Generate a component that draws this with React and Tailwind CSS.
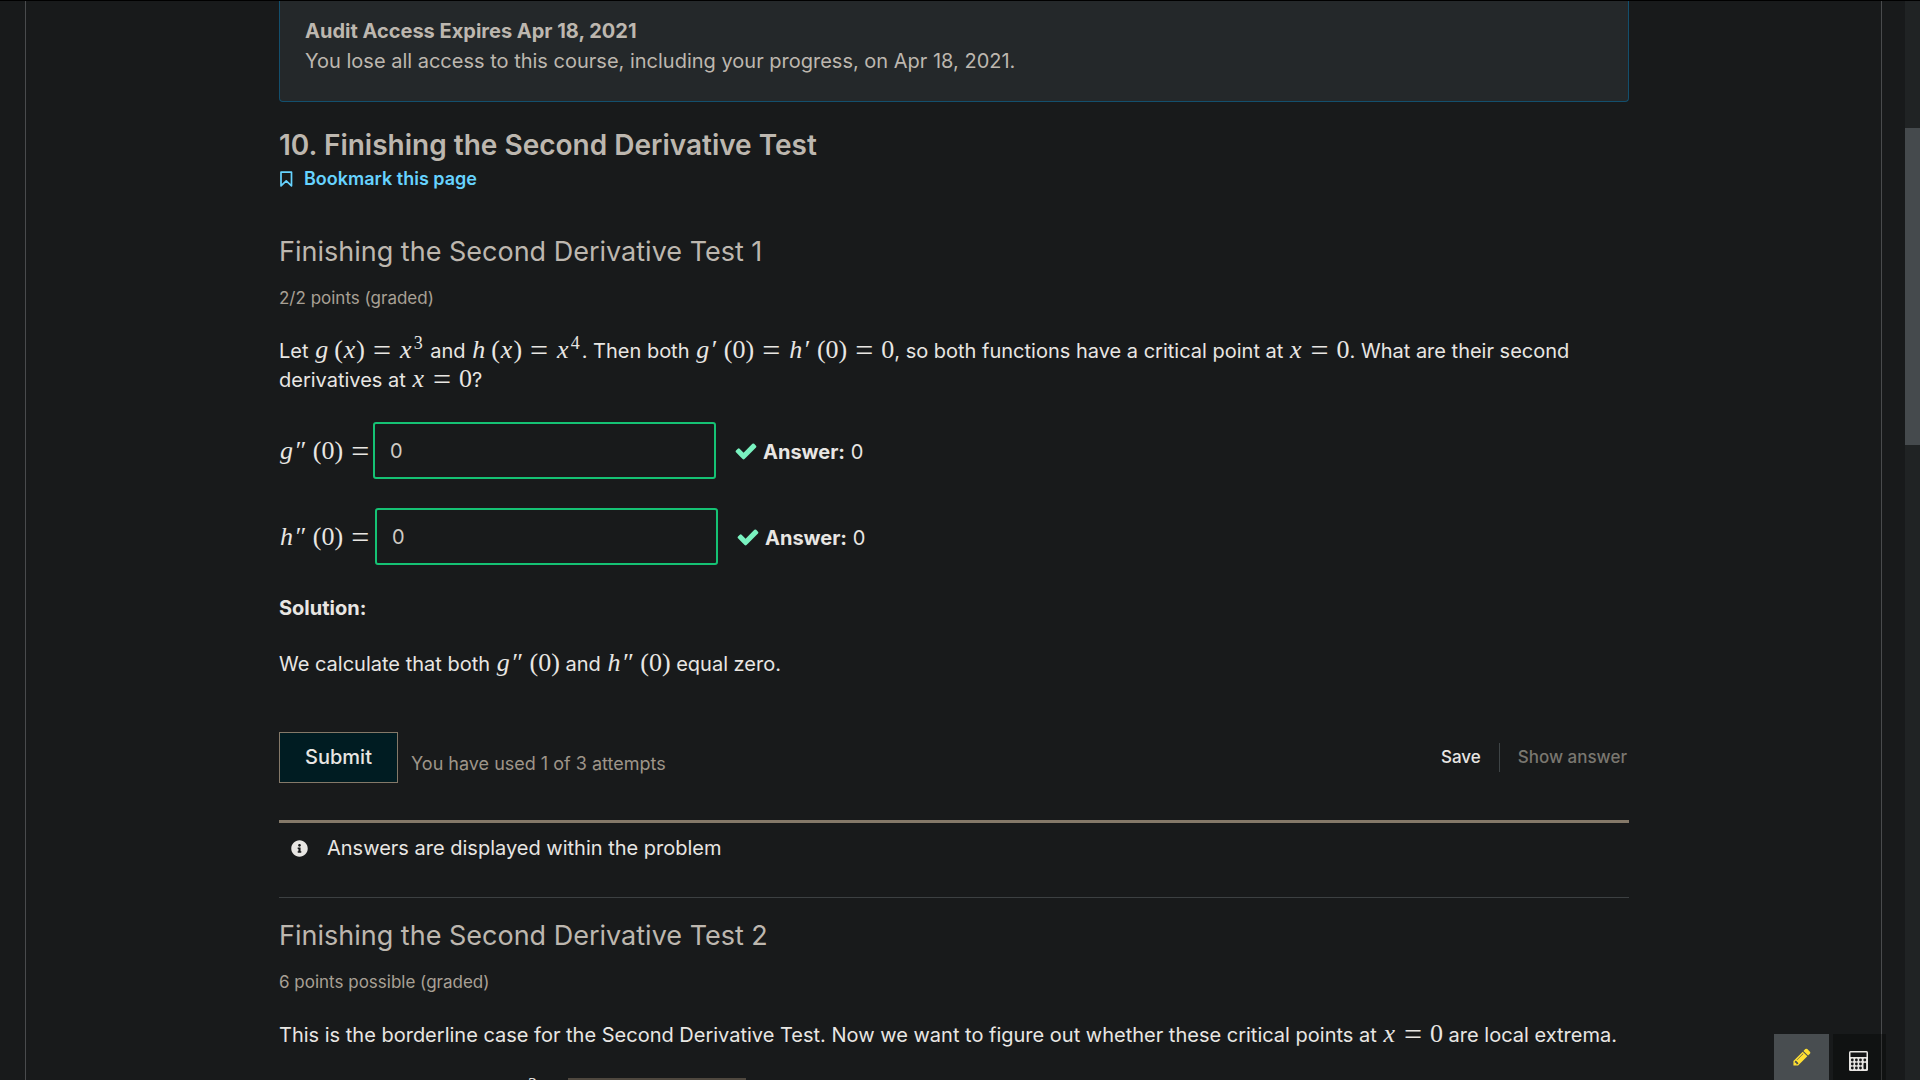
import React from "react";
import { FaInfoCircle } from "react-icons/fa";

function V({ children }) {
  return <i className="px-px">{children}</i>;
}

function Arg({ children }) {
  return <span className="ml-[5px]">({children})</span>;
}

function Eq() {
  return <span className="relative top-[3px] mx-2 text-[32px]">=</span>;
}

function Sup({ children }) {
  return <sup className="relative -top-[9px] ml-px mr-0.5 text-[18px] leading-4">{children}</sup>;
}

function Prime({ double }) {
  return <i className="mr-[3px]">{double ? "″" : "′"}</i>;
}

function M({ children }) {
  return (
    <span className="inline-flex items-baseline whitespace-nowrap font-['Liberation_Serif',serif] text-[26px] leading-5">
      {children}
    </span>
  );
}

function Check() {
  return (
    <svg viewBox="0 0 1792 1792" className="ml-[18px] size-6 fill-[#79f2c0]" aria-label="Correct">
      <path d="M1671 566q0 40-28 68l-724 724-136 136q-28 28-68 28t-68-28l-136-136-362-362q-28-28-28-68t28-68l136-136q28-28 68-28t68 28l294 295 656-657q28-28 68-28t68 28l136 136q28 28 28 68z" />
    </svg>
  );
}

function Answer({ id, name, width }) {
  return (
    <div className="flex h-[57px] items-center">
      <label htmlFor={id} className={width + " pt-1"}>
        <M>
          <V>{name}</V>
          <Prime double />
          <Arg>0</Arg>
          <Eq />
        </M>
      </label>
      <input
        id={id}
        type="text"
        defaultValue="0"
        className="h-full w-[343px] rounded-[3px] border-2 border-[#15c274] bg-[#181a1b] px-[15px] text-[20px] text-[#cfcbc5] outline-none"
      />
      <Check />
      <span className="ml-[5px] pt-1">
        <strong className="font-bold">Answer:</strong> 0
      </span>
    </div>
  );
}

function Heading({ title, points }) {
  return (
    <>
      <h3 className="text-[27px] leading-9 text-[#bdb7af]">{title}</h3>
      <p className="mt-4 text-[17px] leading-6 text-[#a8a095]">{points}</p>
    </>
  );
}

export default function App() {
  return (
    <div className="relative flex h-screen overflow-hidden border-t border-black bg-[#181a1b] font-['Inter',sans-serif] text-[20px] leading-[29px] text-[#e8e6e3]">
      <main className="ml-[25px] mr-[23px] min-w-0 flex-1 border-x border-[#494b4d] px-[252px]">
        <div className="ml-px rounded-b-[4px] border border-t-0 border-[#134f6d] bg-[#24282a] px-[25px] pb-[25px] pt-[15px] leading-[30px] text-[#bdb7af]">
          <p className="font-bold">Audit Access Expires Apr 18, 2021</p>
          <p>You lose all access to this course, including your progress, on Apr 18, 2021.</p>
        </div>

        <div className="ml-px">
          <h2 className="mt-[25px] text-[28px] font-semibold leading-9 text-[#bdb7af]">
            10. Finishing the Second Derivative Test
          </h2>
          <button type="button" className="mt-1 flex items-center gap-[11px] text-[18px] font-semibold leading-6 text-[#66d3ff]">
            <svg width="14" height="16" viewBox="0 0 14 16" fill="none" stroke="currentColor" strokeWidth="1.7" strokeLinejoin="round">
              <path d="M2 1.2h10.5v13.6L7.25 9.9 2 14.8z" />
            </svg>
            Bookmark this page
          </button>

          <section className="mt-[43px]">
            <Heading title="Finishing the Second Derivative Test 1" points="2/2 points (graded)" />
            <p className="mt-[27px]">
              Let{" "}
              <M>
                <V>g</V><Arg><V>x</V></Arg><Eq /><V>x</V><Sup>3</Sup>
              </M>{" "}
              and{" "}
              <M>
                <V>h</V><Arg><V>x</V></Arg><Eq /><V>x</V><Sup>4</Sup>
              </M>
              . Then both{" "}
              <M>
                <V>g</V><Prime /><Arg>0</Arg><Eq /><V>h</V><Prime /><Arg>0</Arg><Eq />0
              </M>
              , so both functions have a critical point at{" "}
              <M>
                <V>x</V><Eq />0
              </M>
              . What are their second derivatives at{" "}
              <M>
                <V>x</V><Eq />0
              </M>
              ?
            </p>
            <div className="mt-[27px] flex flex-col gap-[29px]">
              <Answer id="g2" name="g" width="w-[94px]" />
              <Answer id="h2" name="h" width="w-24" />
            </div>
            <p className="mt-[29px] font-bold">Solution:</p>
            <p className="mt-[27px]">
              We calculate that both{" "}
              <M>
                <V>g</V><Prime double /><Arg>0</Arg>
              </M>{" "}
              and{" "}
              <M>
                <V>h</V><Prime double /><Arg>0</Arg>
              </M>{" "}
              equal zero.
            </p>
            <div className="mt-[53px] flex items-center">
              <button type="button" className="h-[51px] w-[119px] border border-[#847969] bg-[#001c22] font-medium">
                Submit
              </button>
              <span className="ml-[13px] pt-3 text-[18px] text-[#9e9589]">You have used 1 of 3 attempts</span>
              <div className="ml-auto flex text-[17px] font-medium">
                <button type="button" className="border-r border-[#3e4446] pr-[18px]">Save</button>
                <button type="button" disabled className="pl-[18px] pr-[2px] text-[#7a7770]">Show answer</button>
              </div>
            </div>
            <div className="mt-[37px] flex items-center border-t-[3px] border-[#847969] pl-3 pt-[11px]">
              <FaInfoCircle className="text-[17px]" />
              <span className="ml-[19px]">Answers are displayed within the problem</span>
            </div>
          </section>

          <section className="mt-[34px] border-t border-[#3c4042] pt-5">
            <Heading title="Finishing the Second Derivative Test 2" points="6 points possible (graded)" />
            <p className="mt-[27px] whitespace-nowrap">
              This is the borderline case for the Second Derivative Test. Now we want to figure out whether these
              critical points at{" "}
              <M>
                <V>x</V><Eq />0
              </M>{" "}
              are local extrema.
            </p>
            <div className="mt-7 flex items-start">
              <label htmlFor="kind" className="flex w-[289px] items-baseline justify-end pr-2 pt-px">
                The function&nbsp;
                <M>
                  <V>g</V><Arg><V>x</V></Arg><Eq /><V>x</V><Sup>3</Sup>
                </M>
                &nbsp;is
              </label>
              <div className="relative">
                <select id="kind" className="h-9 w-[178px] appearance-none border-2 border-[#4f483f] bg-[#181a1b] text-[18px]">
                  <option></option>
                </select>
                <span className="pointer-events-none absolute bottom-0.5 right-0.5 top-0.5 w-[11px] bg-[#e8e6e3]" />
              </div>
            </div>
          </section>
        </div>
      </main>

      <div className="w-[15px] shrink-0 bg-[#202324] pt-[127px]">
        <div className="h-[317px] bg-[#454a4d]" />
      </div>

      <div className="absolute bottom-0 right-[34px] flex h-[46px] gap-1">
        <button type="button" aria-label="Notes" className="flex w-[55px] items-center justify-center bg-[#484d50]">
          <svg width="20" height="20" viewBox="0 0 1792 1792" fill="#ffe032">
            <path d="M491 1536l91-91-235-235-91 91v107h128v128h107zm523-928q0-22-22-22-10 0-17 7l-542 542q-7 7-7 17 0 22 22 22 10 0 17-7l542-542q7-7 7-17zm-54-192l416 416-832 832h-416v-416zm683 96q0 53-37 90l-166 166-416-416 166-165q36-38 90-38 53 0 91 38l235 234q37 39 37 91z" />
          </svg>
        </button>
        <button type="button" aria-label="Calculator" className="flex w-[53px] items-center justify-center bg-black/30 pr-0.5 pt-2">
          <svg width="19" height="20" viewBox="0 0 19 20">
            <rect width="19" height="20" rx="1.5" fill="#e8e6e3" />
            <g fill="#131415">
              <rect x="1.5" y="1.5" width="16" height="4.5" />
              <circle cx="3.3" cy="9" r="1.4" />
              <circle cx="7.4" cy="9" r="1.4" />
              <circle cx="11.5" cy="9" r="1.4" />
              <circle cx="15.8" cy="9" r="1.4" />
              <circle cx="3.3" cy="13" r="1.4" />
              <circle cx="7.4" cy="13" r="1.4" />
              <circle cx="11.5" cy="13" r="1.4" />
              <circle cx="3.3" cy="17" r="1.4" />
              <circle cx="7.4" cy="17" r="1.4" />
              <circle cx="11.5" cy="17" r="1.4" />
              <rect x="14.5" y="11.8" width="2.6" height="6.4" rx="1" />
            </g>
          </svg>
        </button>
      </div>
    </div>
  );
}
